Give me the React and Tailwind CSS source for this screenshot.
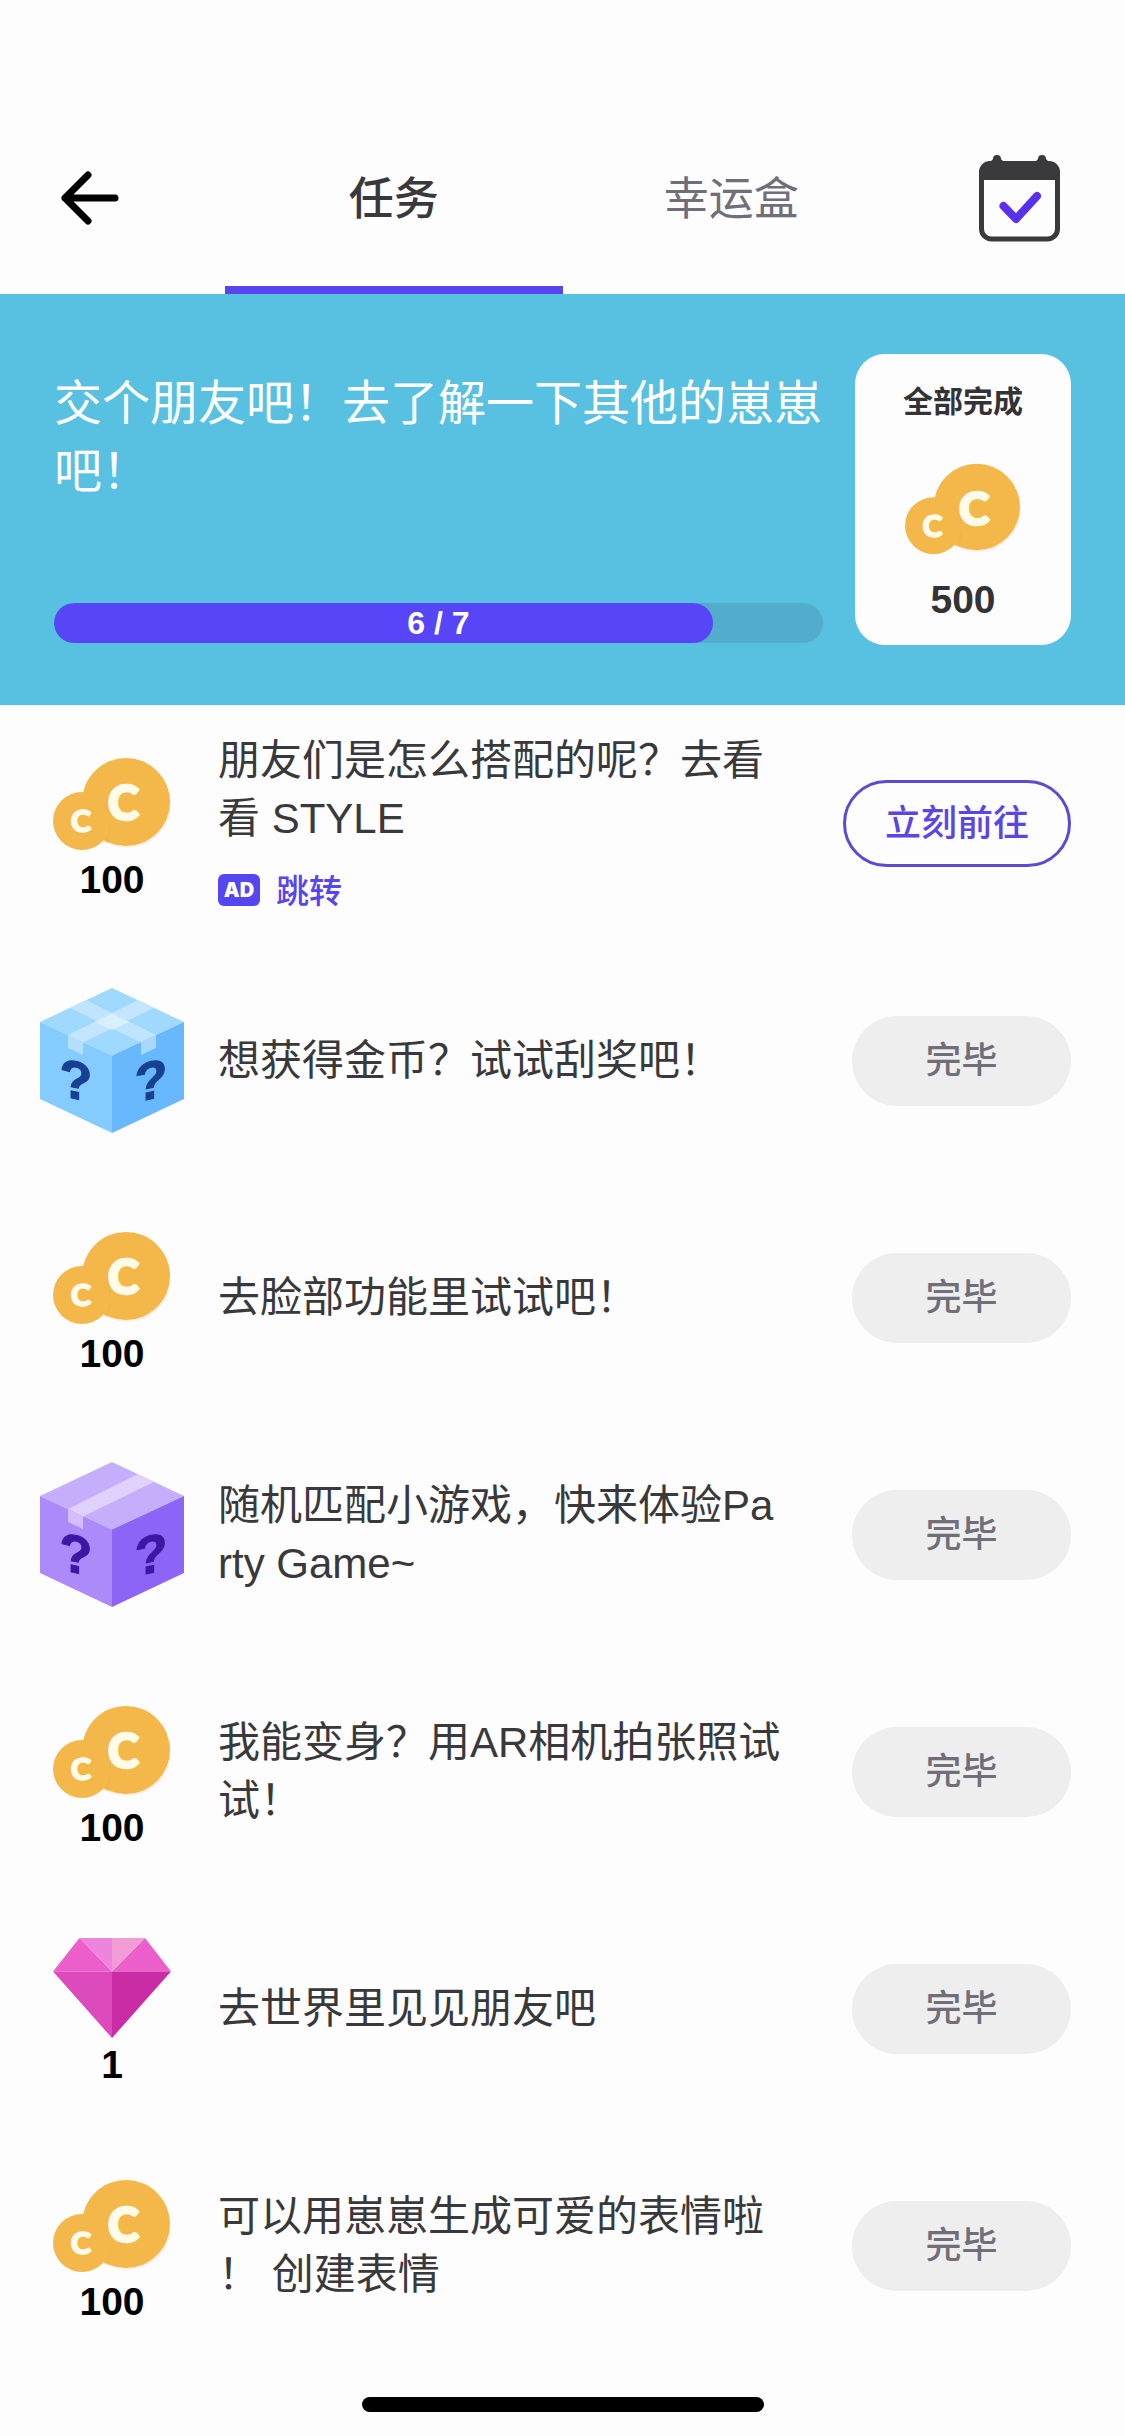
import React from "react";

function Coins({ className }) {
  return (
    <svg viewBox="0 0 120 112" className={className} aria-hidden="true">
      <circle cx="75" cy="56" r="44" fill="#fdf1f0" />
      <circle cx="74" cy="54" r="44" fill="#f3b849" />
      <circle cx="30" cy="73" r="29" fill="#f3b849" />
      <path d="M48 51 A29 29 0 0 1 51 93 A44 44 0 0 0 56 95 Q64 68 48 51Z" fill="#efb043" opacity="0.5" />
      <text x="71.5" y="72" textAnchor="middle" fontSize="47" fontWeight="900" fill="#fffbe9" stroke="#fffbe9" strokeWidth="2.500" strokeLinejoin="round" fontFamily="Lato, sans-serif">C</text>
      <text x="29" y="84" textAnchor="middle" fontSize="31" fontWeight="900" fill="#fffbe9" stroke="#fffbe9" strokeWidth="1.500" strokeLinejoin="round" fontFamily="Lato, sans-serif">C</text>
    </svg>
  );
}

function Gem({ className }) {
  return (
    <svg viewBox="0 0 120 112" className={className} aria-hidden="true">
      <path d="M27.500 5 1 38.500H60Z" fill="#ec5fcb" />
      <path d="M93 5 119 38.500H60Z" fill="#ec5fcb" />
      <path d="M27.500 5H60V38.500Z" fill="#ed84dd" />
      <path d="M60 5H93L60 38.500Z" fill="#f29cd6" />
      <path d="M1 38.500H60V105Z" fill="#dd4abc" />
      <path d="M60 38.500H119L60 105Z" fill="#c92ca4" />
    </svg>
  );
}

const boxColors = {
  blue: { top: "#9fd9fe", left: "#84ccfd", right: "#67b8fc", tape: "#c3e5fe", flap: "#b4defe", mark: "#173f92" },
  purple: { top: "#c5aefb", left: "#ac8af9", right: "#8d65f6", tape: "#e0d1fe", flap: "#d3bdfd", mark: "#3c17a3" },
};

function Box({ tone, className }) {
  const c = boxColors[tone];
  return (
    <svg viewBox="0 0 144 146" className={className} aria-hidden="true">
      <path d="M72 0 144 34 72 67.500 0 34Z" fill={c.top} />
      <path d="M0 34 72 67.500V145L0 111Z" fill={c.left} />
      <path d="M144 34 72 67.500V145L144 111Z" fill={c.right} />
      <path d="M28 47 98 12 114 20 43 54.500Z" fill={c.tape} />
      <path d="M28 47 43 54.500V67L28 60Z" fill={c.flap} />
      {tone === "blue" && (
        <>
          <path d="M116 47 46 12 30 20 101 54.500Z" fill={c.tape} opacity="0.85" />
          <path d="M72 25 89 34 72 42 55 34Z" fill="#d8effe" />
          <path d="M116 47 101 54.500V67L116 60Z" fill="#a9d7fe" />
        </>
      )}
      <text transform="translate(36 111) skewY(12)" textAnchor="middle" fontSize="54" fontWeight="700" fill={c.mark} stroke={c.mark} strokeWidth="1" fontFamily="Liberation Sans, sans-serif">?</text>
      <text transform="translate(111 111) skewY(-12)" textAnchor="middle" fontSize="54" fontWeight="700" fill={c.mark} stroke={c.mark} strokeWidth="1" fontFamily="Liberation Sans, sans-serif">?</text>
    </svg>
  );
}

function CalendarCheck({ className }) {
  return (
    <svg viewBox="0 0 82 88" className={className} aria-hidden="true">
      <path d="M18 5V14M63 5V14" stroke="#3a3a3c" strokeWidth="8" strokeLinecap="round" />
      <path d="M10 9 16 3H20L26 9ZM55 9 61 3H65L71 9Z" fill="#3a3a3c" />
      <rect x="2.500" y="10" width="76" height="75" rx="10" fill="#fdfdfe" stroke="#3a3a3c" strokeWidth="5" />
      <path d="M0 26V18A11 11 0 0 1 11 7H70A11 11 0 0 1 81 18V26Z" fill="#3a3a3c" />
      <path d="M24.500 52 37 65 58 42" fill="none" stroke="#5a30f0" strokeWidth="8" strokeLinecap="round" strokeLinejoin="round" />
    </svg>
  );
}

function BackArrow({ className }) {
  return (
    <svg viewBox="0 0 58 54" className={className} aria-hidden="true">
      <path d="M54 27H4M27 4 4 27 27 50" fill="none" stroke="#000" strokeWidth="7" strokeLinecap="round" strokeLinejoin="round" />
    </svg>
  );
}

const tasks = [
  { reward: "coins", amount: 100, lines: ["朋友们是怎么搭配的呢？去看", "看 STYLE"], ad: "跳转" },
  { reward: "blue", lines: ["想获得金币？试试刮奖吧！"], done: true },
  { reward: "coins", amount: 100, lines: ["去脸部功能里试试吧！"], done: true },
  { reward: "purple", lines: ["随机匹配小游戏，快来体验Pa", "rty Game~"], done: true },
  { reward: "coins", amount: 100, lines: ["我能变身？用AR相机拍张照试", "试！"], done: true },
  { reward: "gem", amount: 1, lines: ["去世界里见见朋友吧"], done: true },
  { reward: "coins", amount: 100, lines: ["可以用崽崽生成可爱的表情啦", "！ 创建表情"], done: true },
];

function Reward({ reward, amount }) {
  if (reward === "blue" || reward === "purple") {
    return <Box tone={reward} className="h-[146px] w-[144px]" />;
  }
  const Icon = reward === "gem" ? Gem : Coins;
  return (
    <>
      <Icon className="h-[112px] w-[120px]" />
      <span className="text-[39px] leading-10 font-bold text-black">{amount}</span>
    </>
  );
}

function Task({ task }) {
  return (
    <li className="flex min-h-[237px] items-center pr-[54px] pl-10">
      <div className="flex w-36 shrink-0 flex-col items-center">
        <Reward reward={task.reward} amount={task.amount} />
      </div>
      <div className="ml-[34px] min-w-0 flex-1">
        <p className="text-[42px] leading-[58px] text-[#39393b]">
          {task.lines.map((line) => (
            <span key={line} className="block whitespace-nowrap">{line}</span>
          ))}
        </p>
        {task.ad && (
          <a href="#ad" className="mt-[22px] flex items-start gap-4 pb-[2px] text-[33px] leading-[44px] font-medium text-[#5646f0]">
            <span className="mt-1 flex h-8 w-[42px] items-center justify-center rounded-md bg-[#5646f0] font-[Inter,sans-serif] text-[20px] font-black text-white">
              AD
            </span>
            {task.ad}
          </a>
        )}
      </div>
      {task.done ? (
        <button type="button" disabled className="h-[90px] w-[219px] shrink-0 rounded-full bg-[#eeeeef] text-[36px] font-medium text-[#706e79]">
          完毕
        </button>
      ) : (
        <button type="button" className="h-[87px] w-[228px] shrink-0 rounded-full border-3 border-[#5c4ad2] text-[36px] font-medium text-[#5b45e4]">
          立刻前往
        </button>
      )}
    </li>
  );
}

export default function App() {
  const done = 6;
  const total = 7;
  return (
    <div className="min-h-screen bg-[#fdfdfe] font-['Liberation_Sans','Noto_Sans_CJK_SC',sans-serif]" lang="zh-CN">
      <header className="grid h-[294px] grid-cols-[1fr_3fr_1fr] pt-[102px]">
        <button type="button" aria-label="返回" className="flex items-center pl-[61px]">
          <BackArrow className="h-[54px] w-[58px]" />
        </button>
        <nav className="grid grid-cols-2 text-[45px]">
          <button type="button" aria-current="page" className="border-b-8 border-[#5746ee] pt-3 font-medium text-[#39393b]">
            任务
          </button>
          <button type="button" className="border-b-8 border-transparent pt-3 text-[#706e79]">幸运盒</button>
        </nav>
        <button type="button" aria-label="签到" className="flex items-center justify-end pr-16">
          <CalendarCheck className="h-[88px] w-[82px]" />
        </button>
      </header>

      <section className="flex gap-8 bg-[#58c1e1] px-[54px] py-[60px]">
        <div className="flex min-w-0 flex-1 flex-col justify-between pt-4 pb-[2px]">
          <h1 className="text-[48px] leading-[68px] text-white">
            <span className="block whitespace-nowrap">交个朋友吧！去了解一下其他的崽崽</span>
            <span className="block">吧！</span>
          </h1>
          <div
            role="progressbar"
            aria-label="任务进度"
            aria-valuenow={done}
            aria-valuemin={0}
            aria-valuemax={total}
            className="relative h-10 overflow-hidden rounded-full bg-[#52accb]"
          >
            <div className="h-full rounded-full bg-[#5746f7]" style={{ width: `${(done / total) * 100}%` }} />
            <span className="absolute inset-0 flex items-center justify-center text-[32px] leading-10 font-bold text-white">
              {done} / {total}
            </span>
          </div>
        </div>
        <div className="flex h-[291px] w-[216px] shrink-0 flex-col items-center rounded-[30px] bg-[#fdfdfe] pt-7 text-[#333335]">
          <h2 className="text-[30px] leading-10 font-bold">全部完成</h2>
          <Coins className="mt-8 h-[110px] w-[118px]" />
          <p className="mt-4 text-[39px] leading-10 font-bold">500</p>
        </div>
      </section>

      <ul>
        {tasks.map((task, i) => (
          <Task key={i} task={task} />
        ))}
      </ul>

      <div className="mx-auto mt-[33px] h-[15px] w-[402px] rounded-full bg-black" />
    </div>
  );
}
